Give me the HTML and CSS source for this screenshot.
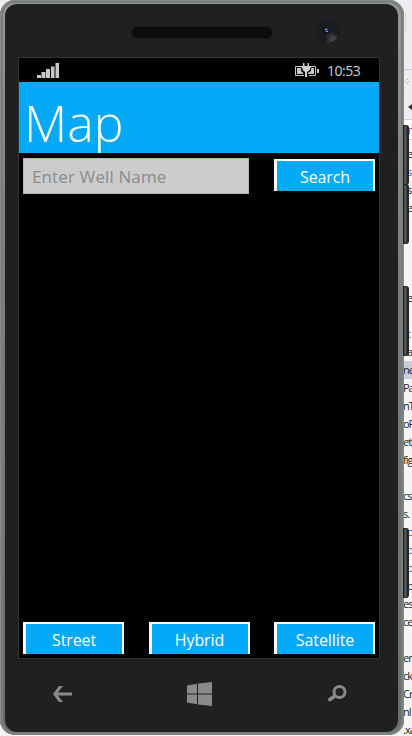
FILE: index.html
```
<!DOCTYPE html>
<html lang="en">
<head>
<meta charset="utf-8">
<title>Map</title>
<link rel="stylesheet" href="styles.css">
</head>
<body>
<div class="desktop">
  <aside class="editor">
    <div class="toolbar"></div>
    <div class="grip"><svg width="10" height="40" viewBox="0 0 10 40"><g fill="#aaa"><path d="M1 7h1v1H1zM5 7h1v1H5zM3 9h1v1H3zM7 9h1v1H7zM1 11h1v1H1zM5 11h1v1H5z"/></g><path d="M10 32L6 35l4 3z" fill="#333"/></svg></div>
    <div class="filter">n</div>
    <div class="tree">
      <p class="indent">e</p><p class="indent blue">s</p><p class="indent">s</p><p class="indent">e</p><p></p><p></p><p></p><p></p><p class="indent">e</p><p></p><p class="indent mid">t</p><p class="indent">a</p><p class="selected">ne</p><p>Pa</p><p>nT</p><p>oP</p><p>etl</p><p>fig</p><p></p><p>cs</p><p>s.</p><p class="indent blue">o</p><p class="indent blue">o</p><p class="indent blue">o</p><p class="indent">p</p><p>es</p><p>ce</p><p></p><p>en</p><p>ck</p><p>Cr</p><p>nl</p><p>.xa</p>
    </div>
  </aside>
  <div class="phone">
    <i class="side-key volume-up"></i><i class="side-key volume-down"></i><i class="side-key power"></i><i class="side-key camera-key"></i>
    <div class="body">
      <div class="top">
        <div class="speaker"></div>
        <svg class="camera" width="26" height="26" viewBox="0 0 26 26"><circle cx="13" cy="13" r="12.800" fill="#1a1d22"/><path d="M13 13l11 5a12.500 12.500 0 0 1-11 7.500z" fill="#302e32"/><path d="M18 17l5 3-4 4-4-3z" fill="#454246"/><circle cx="12.500" cy="12.500" r="4" fill="#111522"/><circle cx="12.500" cy="12" r="2.200" fill="#343663"/><path d="M11 11h2v1h-2z" fill="#50aab8"/><path d="M12 13h2v1h-2z" fill="#8d91cd"/></svg>
      </div>
      <main class="screen">
        <div class="status">
          <svg class="signal" width="22" height="15" viewBox="0 0 22 15"><path fill="#c8c8c8" d="M0 12h4v3H0zM4.500 9H8.500v6h-4zM9 6h4v9H9zM14 3.500h3.500V15H14zM18.500 0H22v15h-3.500z"/></svg>
          <svg class="battery" width="24" height="14" viewBox="0 0 24 14"><path d="M7 3.500H.5v9H9M14 12.500h6.500v-9H16" fill="none" stroke="#c8c8c8"/><path d="M2 5h4v3l2 2v1H2zM19 5h-3v3l-3 2v1h6zM22 6h2v4h-2z" fill="#c8c8c8"/><path d="M8 0h1.500v3h3V0H14v3h2v2h-1v2l-3 2v5h-2V9L7.500 7V5h-1V3H8z" fill="#d0d0d0"/></svg>
          <span class="clock">10:53</span>
        </div>
        <header><h1>Map</h1></header>
        <div class="search-row">
          <input type="text" placeholder="Enter Well Name">
          <button><span>Search</span></button>
        </div>
        <div class="map"></div>
        <div class="modes">
          <button><span>Street</span></button><button><span>Hybrid</span></button><button><span>Satellite</span></button>
        </div>
      </main>
      <nav>
        <svg width="19" height="16" viewBox="0 0 19 16"><path d="M6 0h4L4.800 6.500H19v3H4.800L10 16H6L0 8z" fill="#8a8a8a"/></svg>
        <svg width="25" height="24" viewBox="0 0 25 24"><path d="M0 3.400L10 1.700v9.800H0zM11 1.500L25 0v11.500H11zM0 12.500h10v9.800L0 20.600zM11 12.500h14V24l-14-1.500z" fill="#8a8a8a"/></svg>
        <svg width="20" height="17" viewBox="0 0 20 17"><circle cx="12.500" cy="7" r="5.500" fill="none" stroke="#8a8a8a" stroke-width="3"/><path d="M8.500 10.500L1.500 15.500" stroke="#8a8a8a" stroke-width="3.400"/></svg>
      </nav>
    </div>
  </div>
</div>
</body>
</html>
```
FILE: styles.css
```
* { box-sizing: border-box; }
body { margin: 0; font-family: "Open Sans", "Noto Sans", sans-serif; }
.desktop { position: relative; width: 412px; height: 736px; overflow: hidden; background: linear-gradient(#eeeef2 120px, #f5f5f6 120px); }
.editor { display: flow-root; width: 10px; height: 736px; margin-left: 402px; overflow: hidden; color: #1e1e1e; font-size: 12px; }
.toolbar { width: 4px; height: 20px; margin-top: 13px; border-right: 1px solid #d0d1da; }
.grip { height: 51px; margin-top: 36px; border-top: 1px solid #cccedb; border-bottom: 1px solid #cccedb; background: #eeeef2; }
.grip svg { display: block; margin-top: 2px; }
.filter { height: 20px; padding-left: 6px; line-height: 20px; background: #fff; border-bottom: 1px solid #cccedb; color: #8b4560; font-size: 10px; }
.tree { margin-top: 5px; }
.tree p { height: 18px; margin: 0; padding-left: 1px; line-height: 18px; white-space: nowrap; font-size: 11px; letter-spacing: -1px; }
.tree .indent { padding-left: 5px; }
.tree .blue { color: #2479b5; }
.tree .mid { color: #386f98; }
.tree .selected { background: #cccedb; }

.phone { position: absolute; left: 0; top: 0; width: 404px; height: 735px; padding: 4px 5px 3px; border-radius: 15px; background: linear-gradient(#929995, #7b817e 35%, #686e6c); box-shadow: inset 0 0 0 1px #858c88, inset 0 0 0 3px #777e7b; }
.body { position: relative; width: 393px; height: 728px; border-radius: 12px; background: #202020; display: flex; flex-direction: column; overflow: hidden; }
.side-key { position: absolute; left: 403px; width: 6px; height: 60px; border: 1px solid #222426; border-width: 1px 2px 1px 1px; border-radius: 0 3px 3px 0; background: linear-gradient(90deg, #303335, #606468 55%, #292b2e); }
.volume-up { top: 125px; }
.volume-down { top: 184px; }
.power { top: 286px; height: 70px; }
.camera-key { top: 528px; height: 70px; }
.top { height: 53px; display: flex; padding-left: 126px; }
.speaker { width: 142px; height: 13px; margin-top: 22px; border-radius: 7px; background: #0c0c0c; border: 1px solid #191919; }
.camera { margin: 14px 0 0 41px; }
.screen { width: 362px; height: 602px; margin-left: 13px; border: 1px solid #343434; background: #000; display: flex; flex-direction: column; }
.status { height: 24px; flex: none; display: flex; align-items: flex-start; color: #d0d0d0; }
.signal { margin: 5px 0 0 18px; }
.battery { margin: 5px 0 0 236px; }
.clock { margin: 3px 0 0 8px; font-size: 14px; line-height: 20px; letter-spacing: -.5px; }
header { height: 71px; flex: none; background: #04a9f7; color: #fff; overflow: hidden; }
h1 { margin: 6px 0 0 5px; font-size: 50px; line-height: 70px; font-weight: 300; }
.search-row { display: flex; margin: 5px 4px 0 4px; justify-content: space-between; align-items: flex-start; }
input { width: 226px; height: 36px; padding: 0 8px; border: 1px solid #b5b5b5; border-radius: 0; background: #ccc; font: 17px "Open Sans", sans-serif; letter-spacing: .12px; }
input::placeholder { color: #8b8b8b; opacity: 1; }
button { width: 101px; height: 32px; padding: 2px 0 0; border: 2px solid #fff; border-bottom: 0; border-left-width: 3px; border-radius: 0; background: #04a9f7; color: #fff; font: 16px/28px "Open Sans", sans-serif; letter-spacing: -.1px; }
.search-row button { margin-top: 1px; }
.map { flex: 1; }
.modes { display: flex; justify-content: space-between; margin: 0 4px 4px 4px; }
nav { display: flex; align-items: center; justify-content: space-between; height: 69px; padding: 0 51px 0 48px; }
```
